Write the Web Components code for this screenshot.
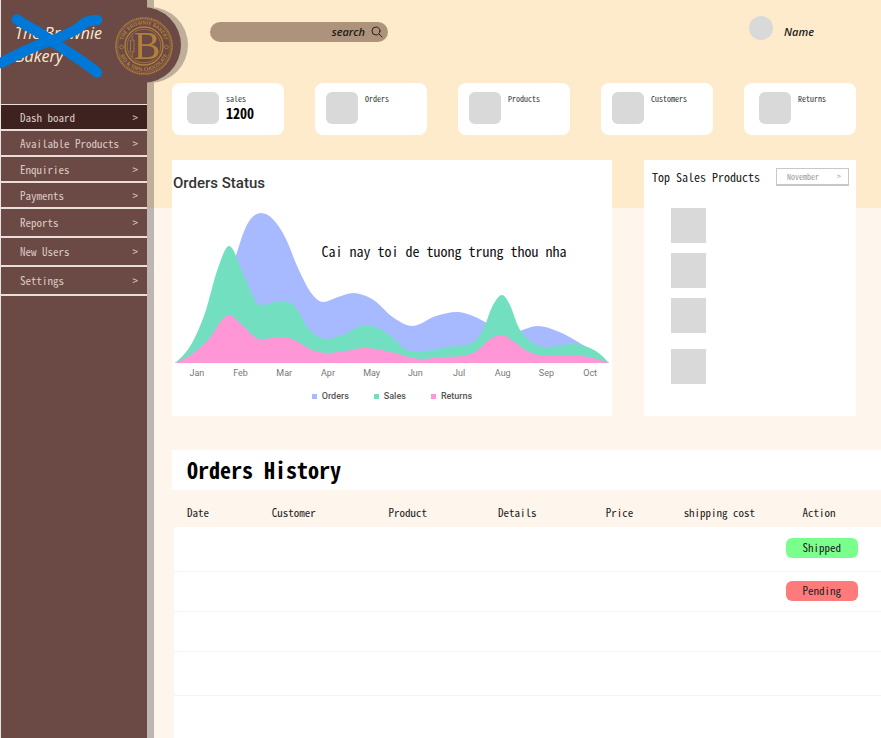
<!DOCTYPE html>
<html lang="en">
<head>
<meta charset="utf-8">
<meta name="viewport" content="width=device-width, initial-scale=1">
<title>The Brownie Bakery – Dashboard</title>
<style>
  html { --mono: "Noto Sans Mono CJK JP", "Liberation Mono", monospace; }
  body {
    margin: 0;
    font-family: var(--mono);
    font-size: 11px;
    color: #222;
    background: #fef5ec linear-gradient(#feebcb, #feebcb) no-repeat 0 0 / 100% 208px;
  }
</style>
</head>
<body>
<bakery-app>
  <side-bar slot="side">
    <nav-item active>Dash board</nav-item>
    <nav-item>Available Products</nav-item>
    <nav-item>Enquiries</nav-item>
    <nav-item>Payments</nav-item>
    <nav-item tall>Reports</nav-item>
    <nav-item tall>New Users</nav-item>
    <nav-item tall>Settings</nav-item>
  </side-bar>
  <top-bar><span slot="user">Name</span></top-bar>
  <stat-row>
    <stat-card inset value="1200">sales</stat-card>
    <stat-card>Orders</stat-card>
    <stat-card>Products</stat-card>
    <stat-card>Customers</stat-card>
    <stat-card inset>Returns</stat-card>
  </stat-row>
  <panel-row>
    <orders-chart heading="Orders Status">Cai nay toi de tuong trung thou nha</orders-chart>
    <top-sales></top-sales>
  </panel-row>
  <orders-history></orders-history>
</bakery-app>

<script>
const define = (name, html, setup) => customElements.define(name, class extends HTMLElement {
  connectedCallback() {
    if (this.shadowRoot) return;
    const t = document.createElement('template');
    t.innerHTML = '<style>*{box-sizing:border-box}:host{display:block;box-sizing:border-box}</style>' + html;
    this.attachShadow({ mode: 'open' }).append(t.content.cloneNode(true));
    if (setup) setup(this, this.shadowRoot);
  }
});

define('bakery-app', `
<style>
  :host { display: flex; min-height: 100vh; }
  slot[name=side]::slotted(*) { flex: 0 0 147px; }
  main { flex: 1; min-width: 0; padding-left: 25px; }
</style>
<slot name="side"></slot>
<main><slot></slot></main>`);

define('side-bar', `
<style>
  :host { position: relative; z-index: 1; background: #6b4944; border-left: 1px solid #e9e3e1;
    filter: drop-shadow(7px 0 0 rgba(0,0,0,.25)); }
  .brand { height: 104px; padding: 22px 0 0 14px; color: #fdebd0;
    font: italic 500 16px/23px "Open Sans", sans-serif; }
  .brand p { margin: 0; }
  .scribble { position: absolute; left: -1px; top: 0; width: 110px; height: 84px; }
  .seal { position: absolute; right: -34px; top: 7px; width: 76px; height: 76px; }
  nav { display: block; border-top: 1px solid #eadfd8; }
</style>
<div class="brand"><p>The Brownie</p><p>Bakery</p></div>
<svg class="seal" viewBox="0 0 76 76" role="img" aria-label="Bakery seal">
  <circle cx="38" cy="38" r="38" fill="#6b4944"/>
  <g fill="none" stroke="#b1803c">
    <circle cx="39" cy="39" r="28" stroke-width="1.6" stroke-dasharray="1.4 .5"/>
    <circle cx="39" cy="39" r="26.3" stroke-width=".5"/>
    <circle cx="39" cy="39" r="19" stroke-width="1.4"/>
    <circle cx="39" cy="39" r="16.8" stroke-width=".7"/>
    <circle cx="16.500" cy="40" r="1.800" stroke-width=".8"/>
    <circle cx="61.500" cy="40" r="1.800" stroke-width=".8"/>
    <path d="M25.500 33v12M29 33v12M27.200 28v4M27.200 46v4M25.500 33h3.500M25.500 45h3.500" stroke-width=".8"/>
  </g>
  <path id="up" d="M17.500 39a21.500 21.500 0 0 1 43 0" fill="none"/>
  <path id="down" d="M14 39a25 25 0 0 0 50 0" fill="none"/>
  <g fill="#b1803c" font-family="Open Sans, sans-serif" font-weight="700" font-size="5" text-anchor="middle">
    <text><textPath href="#up" startOffset="50%">THE BROWNIE BAKERY</textPath></text>
    <text><textPath href="#down" startOffset="50%">BIO &amp; 100% CHOCOLATE</textPath></text>
  </g>
  <text x="42" y="52" text-anchor="middle" fill="#b1803c" stroke="#6b4944" stroke-width="1.600" paint-order="stroke" font-family="Liberation Serif, serif" font-size="40">B</text>
</svg>
<svg class="scribble" viewBox="0 0 110 84" fill="none" stroke="#0078d7" stroke-width="10.500" stroke-linecap="round" stroke-linejoin="round" aria-hidden="true">
  <path d="M17 19.500C25 25 31 28 40 33L65 50C77 58 87 64 97 72.500"/>
  <path d="M1 63C18 54 30 48 44 43C58 39 66 35 75 30C81 28 83 21 90 21L97 20"/>
</svg>
<nav aria-label="Main"><slot></slot></nav>`);

define('nav-item', `
<style>
  a { display: flex; justify-content: space-between; align-items: center; height: 26px;
    padding: 0 9px 1px 19px; border-bottom: 2px solid #eadfd8; color: #dccbc6;
    font: 11px/16px var(--mono); text-decoration: none; white-space: nowrap; }
  :host([tall]) a { height: 29px; }
  :host([active]) a { background: #3e2220; }
</style>
<a href="#"><slot></slot><span aria-hidden="true">&gt;</span></a>`);

define('top-bar', `
<style>
  :host { display: flex; justify-content: space-between; align-items: flex-start; height: 83px; padding: 16px 67px 0 38px; }
  label { display: flex; align-items: center; gap: 6px; width: 178px; height: 20px; margin-top: 6px;
    padding: 0 5px 0 12px; border-radius: 10px; background: #ad937b; }
  input { flex: 1; min-width: 0; padding: 0; border: 0; outline: 0; background: none; text-align: right;
    color: #221a14; font: italic 600 11px/16px "Open Sans", sans-serif; }
  input::placeholder { color: #221a14; opacity: 1; }
  svg { width: 12px; height: 12px; }
  .user { display: flex; gap: 11px; font: italic 600 11px/16px "Open Sans", sans-serif; color: #222; }
  .avatar { width: 24px; height: 24px; border-radius: 50%; background: #d9d9d9; }
  .name { margin-top: 8px; }
</style>
<label>
  <input type="text" placeholder="search" aria-label="search">
  <svg viewBox="0 0 12 12" fill="none" stroke="#2a211a" stroke-linecap="round" aria-hidden="true"><circle cx="5" cy="5" r="4"/><path d="M8 8l3 3"/></svg>
</label>
<div class="user"><span class="avatar"></span><span class="name"><slot name="user"></slot></span></div>`);

define('stat-row', `
<style>:host { display: grid; grid-template-columns: repeat(5, 1fr); gap: 31px; margin-right: 25px; }</style>
<slot></slot>`);

define('stat-card', `
<style>
  :host { display: flex; gap: 7px; height: 52px; padding: 9px 8px 0 11px; border-radius: 8px; background: #fff; }
  :host([inset]) { padding-left: 15px; }
  i { flex: none; width: 32px; height: 32px; border-radius: 6px; background: #d9d9d9; }
  div { display: flex; flex-direction: column; font: 8px/14px var(--mono); color: #333; }
  b { font: 700 14px/14px var(--mono); color: #000; }
</style>
<i></i><div><slot></slot></div>`, (host, root) => {
  const value = host.getAttribute('value');
  if (value) {
    const b = document.createElement('b');
    b.textContent = value;
    root.querySelector('div').append(b);
  }
});

define('panel-row', `
<style>:host { display: grid; grid-template-columns: 440fr 212fr; gap: 32px; margin: 25px 25px 0 0; }</style>
<slot></slot>`);

/* Smooth area under a series of points (monotone cubic, so peaks stay rounded). */
function area(p) {
  const n = p.length, slope = i => (p[i + 1][1] - p[i][1]) / (p[i + 1][0] - p[i][0]);
  const t = p.map((q, i) => {
    if (i === 0) return slope(0) * .7;
    if (i === n - 1) return slope(n - 2);
    const a = slope(i - 1), b = slope(i);
    if (a * b <= 0) return 0;
    const h = q[0] - p[i - 1][0], k = p[i + 1][0] - q[0];
    const m = (a * k + b * h) / (h + k);
    return Math.sign(a) * Math.min(Math.abs(m), 3 * Math.abs(a), 3 * Math.abs(b));
  });
  let d = `M${p[0]}`;
  for (let i = 0; i < n - 1; i++) {
    const b = p[i], c = p[i + 1], w = (c[0] - b[0]) / 3;
    d += `C${b[0] + w} ${b[1] + w * t[i]} ${c[0] - w} ${c[1] - w * t[i + 1]} ${c}`;
  }
  return d + 'Z';
}
const series = [
  ['Orders', '#a8baff', [[3,155],[40,120],[64,47],[73,21],[89,5],[113,29],[126,60],[140,86],[151,94],[166,89],[181,85],[200,91],[222,110],[240,118],[264,108],[285,104],[301,108],[315,115],[338,125],[366,118],[385,123],[411,137],[437,155]]],
  ['Sales', '#72e0c0', [[3,155],[20,135],[33,105],[46,60],[57,38],[73,70],[88,97],[111,93],[123,99],[136,120],[155,131],[173,126],[193,117],[206,120],[221,130],[233,141],[246,144],[275,139],[298,136],[311,122],[321,97],[330,87],[338,97],[346,118],[358,133],[376,139],[401,136],[418,140],[428,146],[437,155]]],
  ['Returns', '#ff96d5', [[3,155],[23,144],[36,132],[57,107],[70,117],[88,131],[113,129],[126,134],[140,142],[156,145],[173,143],[193,140],[223,145],[248,151],[271,149],[291,148],[306,142],[318,131],[330,127],[341,133],[355,143],[378,148],[401,147],[421,150],[437,155]]]
];

define('orders-chart', `
<style>
  :host { position: relative; height: 256px; background: #fff; font-family: Roboto, sans-serif; }
  h2 { margin: 0; padding: 11px 0 13px 1px; font-size: 15px; line-height: 24px; font-weight: 500; color: #333; }
  .plot { display: block; width: 100%; height: 156px; }
  .months { display: grid; grid-template-columns: repeat(10, 1fr); padding-left: 3px; margin-top: 2px;
    font-size: 9px; line-height: 14px; color: #777; text-align: center; }
  .legend { display: flex; justify-content: center; gap: 25px; margin-top: 8px; font-size: 9px; line-height: 16px; font-weight: 500; color: #555; }
  .legend span { display: flex; align-items: center; gap: 5px; }
  .legend i { width: 5px; height: 5px; }
  .note { position: absolute; left: 34%; top: 81px; font: 14px/20px var(--mono); color: #111; white-space: nowrap; }
</style>
<h2></h2>
<svg class="plot" viewBox="0 0 440 156" preserveAspectRatio="none" role="img" aria-label="Orders, sales and returns by month"></svg>
<div class="months"></div>
<div class="legend"></div>
<div class="note"><slot></slot></div>`, (host, root) => {
  root.querySelector('h2').textContent = host.getAttribute('heading');
  root.querySelector('svg').innerHTML = series.map(s => `<path fill="${s[1]}" d="${area(s[2])}"/>`).join('');
  root.querySelector('.months').innerHTML = 'Jan Feb Mar Apr May Jun Jul Aug Sep Oct'.split(' ').map(m => `<span>${m}</span>`).join('');
  root.querySelector('.legend').innerHTML = series.map(s => `<span><i style="background:${s[1]}"></i>${s[0]}</span>`).join('');
});

define('top-sales', `
<style>
  :host { background: #fff; padding: 8px 7px 0 8px; }
  header { display: flex; align-items: center; justify-content: space-between; height: 18px; }
  h2 { margin: 0; font: 12px/18px var(--mono); color: #222; white-space: nowrap; }
  .pick { position: relative; width: 73px; height: 18px; font: 8px/16px var(--mono); color: #999; }
  select { appearance: none; width: 100%; height: 100%; padding: 0 0 0 10px; border: 1px solid #c8c8c8; border-bottom-width: 2px; border-radius: 0; background: #fff; font: inherit; color: #999; }
  .pick span { position: absolute; right: 8px; top: 0; pointer-events: none; }
  ul { display: flex; flex-direction: column; gap: 10px; margin: 22px 0 0; padding: 0 0 0 19px; list-style: none; }
  li { width: 35px; height: 35px; background: #d9d9d9; }
  li:last-child { margin-top: 6px; }
</style>
<header>
  <h2>Top Sales Products</h2>
  <div class="pick"><select aria-label="Month"><option>November</option></select><span aria-hidden="true">&gt;</span></div>
</header>
<ul><li></li><li></li><li></li><li></li></ul>`);

define('orders-history', `
<style>
  :host { margin-top: 34px; }
  h2 { margin: 0; padding: 0 15px 2px; background: #fff; font: 700 22px/38px var(--mono); color: #000; }
  .wrap { padding-left: 2px; }
  table { width: 100%; table-layout: fixed; border-collapse: collapse; }
  th { height: 37px; padding: 6px 0 0 13px; text-align: left; font: 11px/16px var(--mono); color: #222; white-space: nowrap; }
  th:last-child { padding-left: 17px; }
  td { height: 40px; padding: 0 0 1px; background: #fff; border-bottom: 1px solid #fbf2e9; }
  tr.roomy td { height: 44px; }
  tbody tr:last-child td { height: 46px; border: 0; }
  button { display: block; width: 72px; height: 20px; padding: 0 0 1px 17px; border: 0; border-radius: 6px; text-align: left; font: 11px/19px var(--mono); color: #222; }
  .shipped { background: #7bff8c; }
  .pending { background: #ff7b7b; }
</style>
<h2>Orders History</h2>
<div class="wrap"><table>
  <colgroup><col style="width:12%"><col style="width:16.5%"><col style="width:15.5%"><col style="width:15.25%"><col style="width:11%"><col style="width:16.25%"><col></colgroup>
  <thead><tr><th>Date</th><th>Customer</th><th>Product</th><th>Details</th><th>Price</th><th>shipping cost</th><th>Action</th></tr></thead>
  <tbody>
    <tr class="roomy"><td colspan="6"></td><td><button class="shipped">Shipped</button></td></tr>
    <tr><td colspan="6"></td><td><button class="pending">Pending</button></td></tr>
    <tr><td colspan="7"></td></tr>
    <tr class="roomy"><td colspan="7"></td></tr>
    <tr><td colspan="7"></td></tr>
  </tbody>
</table></div>`);
</script>
</body>
</html>
